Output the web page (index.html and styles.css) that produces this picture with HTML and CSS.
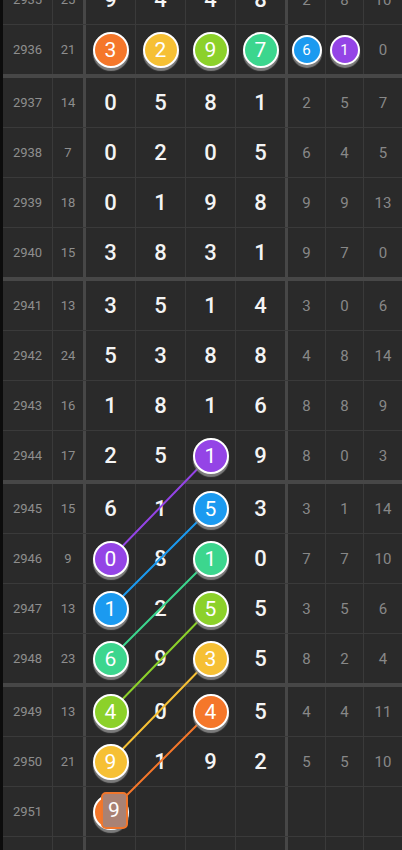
FILE: index.html
```html
<!DOCTYPE html>
<html lang="zh">
<head>
<meta charset="utf-8">
<title>走势图</title>
<link rel="stylesheet" href="styles.css">
</head>
<body>
<div class="chart">
  <svg class="links" width="399" height="900" viewBox="3 -25 399 900">
    <line x1="210.5" y1="455.5" x2="110.5" y2="558.5" stroke="#9444e6"/>
    <line x1="210.5" y1="508.5" x2="110.5" y2="608.5" stroke="#1b9af0"/>
    <line x1="210.5" y1="558.5" x2="110.5" y2="658.5" stroke="#3cd68e"/>
    <line x1="210.5" y1="608.5" x2="110.5" y2="711.5" stroke="#8cd12a"/>
    <line x1="210.5" y1="658.5" x2="110.5" y2="761.5" stroke="#f6c034"/>
    <line x1="210.5" y1="711.5" x2="110.5" y2="811.5" stroke="#f5772a"/>
  </svg>

  <div class="row">
    <div class="c p">2935</div><div class="c s">25</div>
    <div class="c d">9</div><div class="c d">4</div><div class="c d">4</div><div class="c d last">8</div>
    <div class="c r">2</div><div class="c r">8</div><div class="c r end">10</div>
  </div>
  <div class="row group">
    <div class="c p">2936</div><div class="c s">21</div>
    <div class="c d"><span class="ball orange">3</span></div><div class="c d"><span class="ball yellow">2</span></div><div class="c d"><span class="ball lime">9</span></div><div class="c d last"><span class="ball green">7</span></div>
    <div class="c r"><span class="ball small blue">6</span></div><div class="c r"><span class="ball small purple">1</span></div><div class="c r end">0</div>
  </div>

  <div class="row">
    <div class="c p">2937</div><div class="c s">14</div>
    <div class="c d">0</div><div class="c d">5</div><div class="c d">8</div><div class="c d last">1</div>
    <div class="c r">2</div><div class="c r">5</div><div class="c r end">7</div>
  </div>
  <div class="row">
    <div class="c p">2938</div><div class="c s">7</div>
    <div class="c d">0</div><div class="c d">2</div><div class="c d">0</div><div class="c d last">5</div>
    <div class="c r">6</div><div class="c r">4</div><div class="c r end">5</div>
  </div>
  <div class="row">
    <div class="c p">2939</div><div class="c s">18</div>
    <div class="c d">0</div><div class="c d">1</div><div class="c d">9</div><div class="c d last">8</div>
    <div class="c r">9</div><div class="c r">9</div><div class="c r end">13</div>
  </div>
  <div class="row group">
    <div class="c p">2940</div><div class="c s">15</div>
    <div class="c d">3</div><div class="c d">8</div><div class="c d">3</div><div class="c d last">1</div>
    <div class="c r">9</div><div class="c r">7</div><div class="c r end">0</div>
  </div>

  <div class="row">
    <div class="c p">2941</div><div class="c s">13</div>
    <div class="c d">3</div><div class="c d">5</div><div class="c d">1</div><div class="c d last">4</div>
    <div class="c r">3</div><div class="c r">0</div><div class="c r end">6</div>
  </div>
  <div class="row">
    <div class="c p">2942</div><div class="c s">24</div>
    <div class="c d">5</div><div class="c d">3</div><div class="c d">8</div><div class="c d last">8</div>
    <div class="c r">4</div><div class="c r">8</div><div class="c r end">14</div>
  </div>
  <div class="row">
    <div class="c p">2943</div><div class="c s">16</div>
    <div class="c d">1</div><div class="c d">8</div><div class="c d">1</div><div class="c d last">6</div>
    <div class="c r">8</div><div class="c r">8</div><div class="c r end">9</div>
  </div>
  <div class="row group">
    <div class="c p">2944</div><div class="c s">17</div>
    <div class="c d">2</div><div class="c d">5</div><div class="c d"><span class="ball purple">1</span></div><div class="c d last">9</div>
    <div class="c r">8</div><div class="c r">0</div><div class="c r end">3</div>
  </div>

  <div class="row">
    <div class="c p">2945</div><div class="c s">15</div>
    <div class="c d">6</div><div class="c d">1</div><div class="c d"><span class="ball blue">5</span></div><div class="c d last">3</div>
    <div class="c r">3</div><div class="c r">1</div><div class="c r end">14</div>
  </div>
  <div class="row">
    <div class="c p">2946</div><div class="c s">9</div>
    <div class="c d"><span class="ball purple">0</span></div><div class="c d">8</div><div class="c d"><span class="ball green">1</span></div><div class="c d last">0</div>
    <div class="c r">7</div><div class="c r">7</div><div class="c r end">10</div>
  </div>
  <div class="row">
    <div class="c p">2947</div><div class="c s">13</div>
    <div class="c d"><span class="ball blue">1</span></div><div class="c d">2</div><div class="c d"><span class="ball lime">5</span></div><div class="c d last">5</div>
    <div class="c r">3</div><div class="c r">5</div><div class="c r end">6</div>
  </div>
  <div class="row group">
    <div class="c p">2948</div><div class="c s">23</div>
    <div class="c d"><span class="ball green">6</span></div><div class="c d">9</div><div class="c d"><span class="ball yellow">3</span></div><div class="c d last">5</div>
    <div class="c r">8</div><div class="c r">2</div><div class="c r end">4</div>
  </div>

  <div class="row">
    <div class="c p">2949</div><div class="c s">13</div>
    <div class="c d"><span class="ball lime">4</span></div><div class="c d">0</div><div class="c d"><span class="ball orange">4</span></div><div class="c d last">5</div>
    <div class="c r">4</div><div class="c r">4</div><div class="c r end">11</div>
  </div>
  <div class="row">
    <div class="c p">2950</div><div class="c s">21</div>
    <div class="c d"><span class="ball yellow">9</span></div><div class="c d">1</div><div class="c d">9</div><div class="c d last">2</div>
    <div class="c r">5</div><div class="c r">5</div><div class="c r end">10</div>
  </div>
  <div class="row">
    <div class="c p">2951</div><div class="c s"></div>
    <div class="c d"><span class="ball orange pending"><span class="pick">9</span></span></div><div class="c d"></div><div class="c d"></div><div class="c d last"></div>
    <div class="c r"></div><div class="c r"></div><div class="c r end"></div>
  </div>
  <div class="row group">
    <div class="c p"></div><div class="c s"></div>
    <div class="c d"></div><div class="c d"></div><div class="c d"></div><div class="c d last"></div>
    <div class="c r"></div><div class="c r"></div><div class="c r end"></div>
  </div>
</div>
</body>
</html>
```

FILE: styles.css
```css
html, body {
  margin: 0;
  padding: 0;
  background: #0c0c0c;
  height: 850px;
  overflow: hidden;
}

body {
  font-family: Roboto, "Noto Sans", "Liberation Sans", sans-serif;
}

.chart {
  position: relative;
  margin: -25px 0 0 3px;
  width: 399px;
  background: #2a2a2a;
}

.links {
  position: absolute;
  top: 0;
  left: 0;
  z-index: 1;
  stroke-width: 2;
  stroke-linecap: round;
}

.row {
  display: grid;
  grid-template-columns: 50px 33px 50px 50px 50px 52px 38px 38px 38px;
  height: 50px;
  box-sizing: border-box;
  border-bottom: 1px solid #3a3a3a;
}

.row.group {
  height: 53px;
  border-bottom: 4px solid #474747;
}

.c {
  display: flex;
  align-items: center;
  justify-content: center;
  box-sizing: border-box;
  border-right: 1px solid #3a3a3a;
}

.p {
  font-size: 13px;
  color: #8e8e8e;
}

.s {
  font-size: 13px;
  color: #8e8e8e;
  border-right: 3px solid #474747;
}

.d {
  font-size: 22px;
  font-weight: 500;
  color: #f4f4f4;
}

.d.last {
  border-right: 3px solid #474747;
}

.r {
  font-size: 15px;
  color: #888888;
}

.r.end {
  border-right: none;
}

.ball {
  position: relative;
  z-index: 2;
  display: flex;
  align-items: center;
  justify-content: center;
  width: 36px;
  height: 36px;
  box-sizing: border-box;
  border: 2px solid #ffffff;
  border-radius: 50%;
  box-shadow: 0 3px 1px rgba(140, 140, 140, 0.85);
  font-size: 21px;
  font-weight: 400;
  color: #ffffff;
}

.ball.small {
  width: 30px;
  height: 30px;
  font-size: 15px;
}

.orange { background: #f5772a; }
.yellow { background: #f6c034; }
.lime { background: #8cd12a; }
.green { background: #3cd68e; }
.blue { background: #1b9af0; }
.purple { background: #9444e6; }

.ball.pending {
  color: transparent;
}

.pick {
  position: absolute;
  left: 6px;
  top: -4px;
  width: 27px;
  height: 37px;
  box-sizing: border-box;
  border: 2px solid #f0762c;
  border-radius: 5px;
  background: #a98274;
  display: flex;
  align-items: center;
  justify-content: center;
  font-size: 21px;
  color: #ffffff;
}
```
